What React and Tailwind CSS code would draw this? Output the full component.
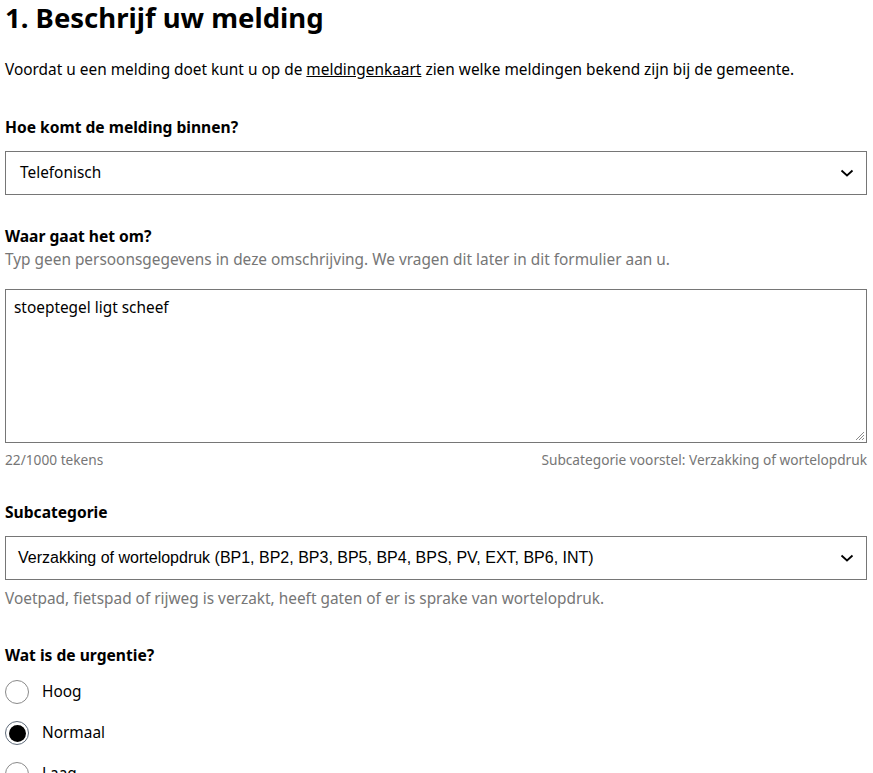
export default function App() {
  const font = { fontFamily: '"Noto Sans", "Open Sans", sans-serif' }
  return (
    <div className="bg-white min-h-screen text-black" style={font}>
      <div className="pl-[5px] pr-[6px]">
        <h1 className="text-[27.5px] font-bold leading-[36px]">1. Beschrijf uw melding</h1>

        <p className="mt-[22px] text-[15.4px] leading-6">
          Voordat u een melding doet kunt u op de <a className="underline" href="#">meldingenkaart</a> zien welke meldingen bekend zijn bij de gemeente.
        </p>

        <label className="block mt-[33px] text-[15.6px] font-bold leading-6">Hoe komt de melding binnen?</label>
        <div className="mt-[12px] h-[44px] border border-[#767676] flex items-center justify-between pl-[14px] pr-[12px]">
          <span className="text-[15.4px]">Telefonisch</span>
          <Chevron />
        </div>

        <label className="block mt-[29px] text-[15.6px] font-bold leading-6">Waar gaat het om?</label>
        <p className="text-[15.4px] leading-6 text-[#767676]">Typ geen persoonsgegevens in deze omschrijving. We vragen dit later in dit formulier aan u.</p>
        <div className="mt-[17px] h-[154px] border border-[#767676] relative px-[8px] py-[5px]">
          <span className="text-[15.4px] leading-6">stoeptegel ligt scheef</span>
          <svg className="absolute right-[1px] bottom-[1px]" width="10" height="10" viewBox="0 0 10 10">
            <path d="M9 1 L1 9 M9 4 L4 9 M9 7 L7 9" stroke="#8a8a8a" strokeWidth="1" />
          </svg>
        </div>
        <div className="mt-[7px] flex justify-between text-[13.7px] leading-5 text-[#767676]">
          <span>22/1000 tekens</span>
          <span>Subcategorie voorstel: Verzakking of wortelopdruk</span>
        </div>

        <label className="block mt-[30px] text-[15.6px] font-bold leading-6">Subcategorie</label>
        <div className="mt-[12px] h-[44px] border border-[#767676] flex items-center justify-between pl-[12px] pr-[12px]">
          <span className="text-[16px] font-['Liberation_Sans',Arial,sans-serif]">Verzakking of wortelopdruk (BP1, BP2, BP3, BP5, BP4, BPS, PV, EXT, BP6, INT)</span>
          <Chevron />
        </div>
        <p className="mt-[7px] text-[15.4px] leading-6 text-[#767676]">Voetpad, fietspad of rijweg is verzakt, heeft gaten of er is sprake van wortelopdruk.</p>

        <label className="block mt-[32px] text-[15.6px] font-bold leading-6">Wat is de urgentie?</label>
        <div className="mt-[13px] flex flex-col gap-[17px]">
          <Radio label="Hoog" />
          <Radio label="Normaal" checked />
          <Radio label="Laag" />
        </div>
      </div>
    </div>
  )
}

function Chevron() {
  return (
    <svg width="14" height="14" viewBox="0 0 14 14" fill="none">
      <path d="M1.5 4.5 L7 9.5 L12.5 4.5" stroke="#000" strokeWidth="1.8" />
    </svg>
  )
}

function Radio({ label, checked }) {
  return (
    <div className="flex items-center gap-[13px] h-[24px]">
      <span className={`w-[24px] h-[24px] rounded-full border flex items-center justify-center shrink-0 ${checked ? 'border-[#5f6b7a]' : 'border-[#8a8a8a]'}`}>
        {checked && <span className="w-[17px] h-[17px] rounded-full bg-black" />}
      </span>
      <span className="text-[15.4px]">{label}</span>
    </div>
  )
}
